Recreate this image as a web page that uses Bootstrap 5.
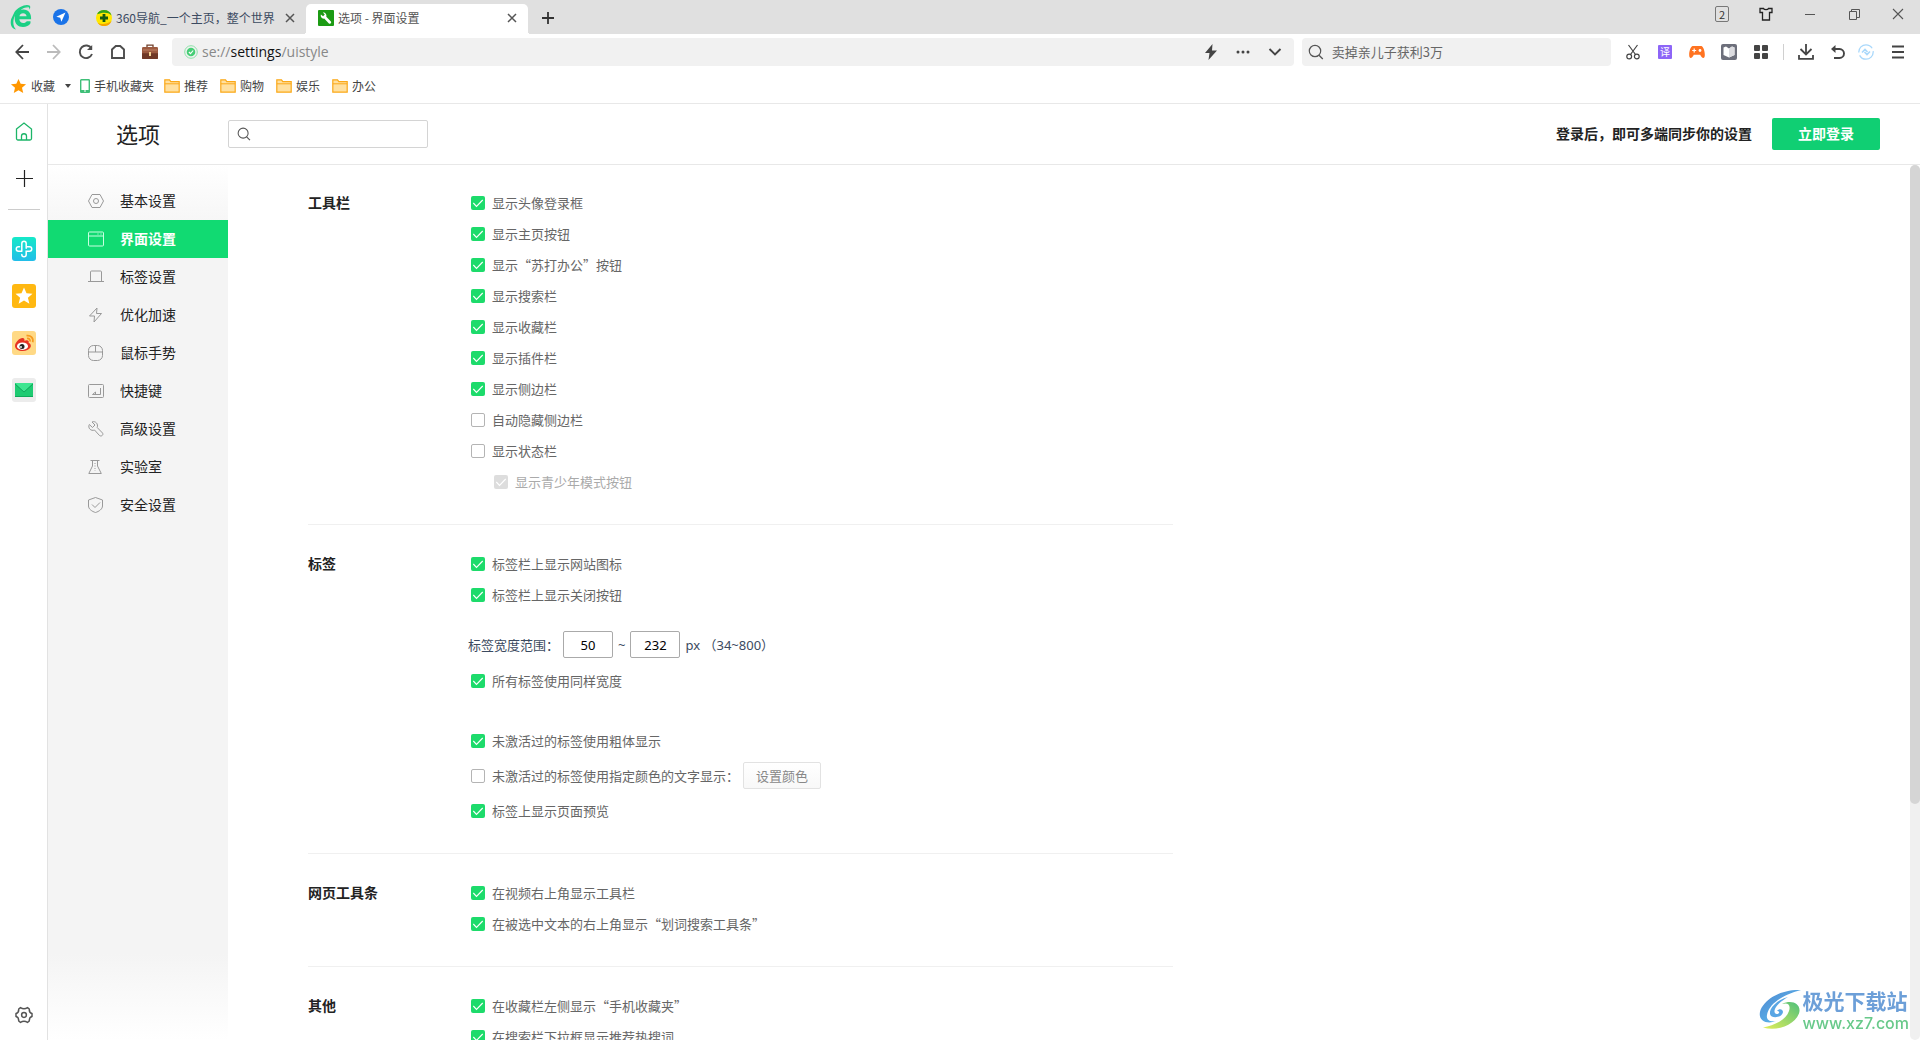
<!DOCTYPE html>
<html lang="zh-CN">
<head>
<meta charset="utf-8">
<meta name="viewport" content="width=device-width, initial-scale=1">
<title>选项 - 界面设置</title>
<link href="https://cdn.jsdelivr.net/npm/bootstrap@5.3.0/dist/css/bootstrap.min.css" rel="stylesheet">
<style>
body{font-family:"Noto Sans CJK SC",sans-serif;font-size:12px;line-height:20px;color:#444;background:#fff}
svg{display:block;flex:none}
button{font-family:inherit}
.plain-btn{border:0;background:none;padding:0;display:flex;align-items:center;justify-content:center;color:#4d4d4d;flex:none}
.fill-y{min-height:0;min-width:0}
/* tab strip */
.tab-strip{height:34px;background:#e0e0e0}
.strip-logo{width:41px}
.strip-pin{width:39px}
.page-tab{width:222px;height:28px;padding:0 8px 0 12px;color:#3b4a60;gap:4px}
.page-tab.current{height:32px;background:#fff;border-radius:5px 5px 0 0;color:#555;position:relative;padding-bottom:4px}
.page-tab.current::before,.page-tab.current::after{content:"";position:absolute;bottom:0;width:5px;height:5px}
.page-tab.current::before{left:-5px;background:radial-gradient(circle at 0 0,transparent 5px,#fff 5px)}
.page-tab.current::after{right:-5px;background:radial-gradient(circle at 100% 0,transparent 5px,#fff 5px)}
.page-tab a,.fav-bar a{color:inherit;text-decoration:none;white-space:nowrap}
.tab-close{width:16px;height:16px}
.strip-btn{width:40px;height:28px}
.win-btn{width:44px;height:28px}
.win-count{border:1px solid #777;border-radius:2px;width:14px;height:16px;line-height:14px;font-size:11px;color:#333}
/* address row */
.nav-row{height:36px;padding:0 2px 0 6px}
.tool-btn{width:32px;height:28px}
.sync-btn{width:24px}
.menu-btn{width:40px}
.omni{height:28px;background:#f1f1f1;border-radius:4px}
.omni-url{flex:1124 1 0;margin-left:6px;padding:0 3px 0 12px}
.omni-url .url{font:14px/20px "Open Sans","Noto Sans",sans-serif;color:#888}
.omni-url .url b{font-weight:400;color:#111}
.omni-find{flex:308 1 0;margin-left:8px;padding-left:6px}
.omni-find input{font-size:13px;color:#555}
.omni-find input::placeholder{color:#666;opacity:1}
.ext-tools{margin-left:6px}
.bare-input{border:0;background:none;outline:0;padding:0;min-width:0;flex:1}
.tool-sep{width:13px;display:flex;justify-content:center}
.tool-sep i{width:1px;height:16px;background:#d0d0d0}
/* favourites */
.fav-bar{height:34px;border-bottom:1px solid #e8e8e8;padding:0 0 2px 10px}
.fav-bar a{display:flex;align-items:center;gap:4px}
.fav-more{padding:0 9px 0 10px}
.fav-list{gap:12px;margin-left:10px}
/* rail */
.rail{width:48px;border-right:1px solid #e2e2e2}
.rail .plain-btn{width:100%}
.rail .rail-add{margin-top:25px}
.rail hr{width:32px;margin:22px 0 0;border-color:#ccc;opacity:1}
.rail-apps{margin-top:27px;gap:23px}
/* page header */
.page-head{height:61px;border-bottom:1px solid #e8e8e8;padding-right:40px}
.page-head h1{font-size:22px;line-height:32px;font-weight:400;color:#222;margin:0;width:180px;padding:0 0 2px 68px}
.head-find{width:200px;height:28px;border:1px solid #d4d4d4;border-radius:2px;padding-left:8px}
.login-tip{font-size:14px;font-weight:700;color:#222;padding-bottom:2px}
.login-btn{width:108px;height:32px;border:0;border-radius:2px;background:#10cf73;color:#fff;font-size:14px;font-weight:700;margin-left:20px;padding:0 0 2px}
/* side menu */
.side-menu{width:180px;padding-top:17px;background:linear-gradient(#fff 0,#f4f4f4 70px,#f4f4f4 calc(100% - 86px),#fff 100%)}
.side-menu a{display:flex;align-items:center;height:38px;padding:0 0 2px 40px;gap:16px;font-size:14px;color:#222;text-decoration:none}
.side-menu svg{width:16px;height:16px;margin-top:2px;fill:none;stroke:#999;stroke-width:1}
.side-menu a.active{background:#11da72;color:#fff;font-weight:700}
.side-menu a.active svg{stroke:#c8ffe0}
/* options */
.options{padding-left:80px;overflow:hidden}
.opt-group{max-width:865px;padding:23px 0 27px;border-bottom:1px solid #f0f0f0}
.opt-group:first-child{padding-top:22px}
.opt-group h2{width:160px;margin:0;font-size:14px;line-height:30px;font-weight:700;color:#222;flex:none}
.opt-row{display:flex;align-items:center;height:31px;padding-left:3px;font-size:13px;color:#666;white-space:nowrap}
.opt-row .form-check-input{width:14px;height:14px;margin:0 7px 0 0;border:1px solid #b4b4b4;border-radius:2px;background-size:14px 14px;flex:none}
.opt-row .form-check-input:checked{background-color:#1ddb6b;border:0;background-image:url("data:image/svg+xml,%3csvg xmlns='http://www.w3.org/2000/svg' viewBox='0 0 14 14'%3e%3cpath fill='none' stroke='%23fff' stroke-width='1.1' d='M2.3 7l3.2 3.4L11.7 4'/%3e%3c/svg%3e")}
.opt-row.off{padding-left:26px;color:#aaa}
.opt-row.off .form-check-input{background-color:#ddd;opacity:1}
.opt-row.off label{opacity:1}
.opt-row.range{height:41px;margin-top:14px;padding-left:0;color:#3b4a60;font-family:"Noto Sans","Noto Sans CJK SC",sans-serif}
.range-dash{padding:0 5px}
.range-unit{margin-left:5px}
.opt-row.spaced{margin-top:29px}
.opt-row.tall{height:39px}
.num-box{width:50px;height:27px;border:1px solid #aaa;border-radius:2px;text-align:center;font-size:13px;color:#000;padding:0}
.color-btn{width:78px;height:27px;border:1px solid #e2e2e2;border-radius:2px;background:linear-gradient(#fff,#f8f8f8);color:#888;font-size:13px;padding:0;margin-left:4px}
.scroll-track{width:10px;background:#f0f0f0;border-radius:5px}
.scroll-track div{height:73%;background:#d5d5d5;border-radius:5px}
/* corner stamp */
.site-stamp{position:fixed;right:11px;bottom:7px;gap:1px}
.site-stamp .zh{font-size:21px;line-height:26px;font-weight:700;color:#6c9fd8}
.site-stamp .en{font:500 16px/20px Inter,sans-serif;color:#68c98a}
</style>
<script src="https://cdn.jsdelivr.net/npm/bootstrap@5.3.0/dist/js/bootstrap.bundle.min.js"></script>
</head>
<body class="vh-100 d-flex flex-column overflow-hidden">

<svg width="0" height="0" class="position-absolute">
  <symbol id="folder" viewBox="0 0 16 14"><path d="M.8 13.200V.8h4.700l1.300 1.900h8.400v10.500z" fill="#ffe0a0" stroke="#fba919" stroke-width="1.200"/><path d="M.8 4.800h14.400" stroke="#fba919"/></symbol>
  <symbol id="cross" viewBox="0 0 10 10"><path d="M1 1l8 8M9 1L1 9" stroke="#555" stroke-width="1.500"/></symbol>
  <symbol id="lens" viewBox="0 0 16 16"><circle cx="7" cy="7" r="5.700" fill="none" stroke="#555" stroke-width="1.200"/><path d="M11 11.200l3.800 3.800" stroke="#555" stroke-width="1.300"/></symbol>
</svg>

<header>
  <div class="tab-strip d-flex">
    <div class="strip-logo d-flex align-items-center justify-content-end">
      <svg width="32" height="28" viewBox="0 0 32 28"><path d="M25.500 20.200C23.900 22.700 21.200 24 18 24c-5 0-8.300-3.500-8.300-8.500 0-5.200 3.600-8.900 8.500-8.900 5.300 0 8.300 4 7.900 9.700H14.300c.3 2.400 1.700 3.700 4 3.700 1.500 0 2.700-.7 3.400-1.800h3.800zM14.400 13.200h7.200c-.3-1.900-1.600-3-3.500-3s-3.300 1.100-3.700 3z" fill="#1bd084" transform="translate(-4)"/><path d="M9 12c2-4.700 6.500-8.200 12-7.800-1-1-4-.9-6-.1C10.500 6 7.500 9.500 6.500 14" fill="#1bd084" transform="translate(-1)"/><path d="M5.500 9C9 4 17 .7 20.500 2.600c1.200.8.900 2.600-.1 4.100.1-1.700-.3-2.700-1.800-2.900C14 3.200 9 7 6 12.500 3.800 16.700 3.500 23 7 26.500 2.600 26 .8 21 2.200 16" fill="#1bd084"/></svg>
    </div>
    <div class="strip-pin d-flex align-items-center justify-content-center">
      <svg width="16" height="34" viewBox="0 0 16 34"><circle cx="8" cy="17" r="8" fill="#1a73e8"/><path d="M12.500 12.500L3.300 16.800l3.900 1 1.200 4z" fill="#fff"/></svg>
    </div>
    <div class="d-flex pt-1 mt-auto align-items-end">
      <div class="page-tab d-flex align-items-center align-self-start ms-1">
        <svg width="16" height="16" viewBox="0 0 16 16"><circle cx="8" cy="8" r="8" fill="#ffe800"/><path d="M8 0a8 8 0 0 1 7.600 5.500C12 1.500 6 2.500 1 4.200A8 8 0 0 1 8 0z" fill="#2fa21f"/><path d="M15.500 11A8 8 0 0 1 1.500 12.700C6 15 11 14 15.500 11z" fill="#f5a400"/><path d="M8 4v8M4 8h8" stroke="#155a12" stroke-width="2.800"/></svg>
        <a href="#" class="flex-grow-1">360导航_一个主页，整个世界</a>
        <button class="plain-btn tab-close" aria-label="关闭标签"><svg width="10" height="10"><use href="#cross"/></svg></button>
      </div>
      <div class="page-tab current d-flex align-items-center">
        <svg width="16" height="16" viewBox="0 0 16 16"><rect width="16" height="16" rx="1" fill="#1c9b14"/><path d="M4.800 2.600l2 2-1.700 1.700-2.200-1.800c-.7 2.200 1 4.500 3.300 4.100l4.700 4.800c1.300 1 3-.6 2-1.900L8.300 6.800c.7-2.500-1.300-4.600-3.500-4.200z" fill="#fff"/></svg>
        <a href="#" class="flex-grow-1">选项 - 界面设置</a>
        <button class="plain-btn tab-close" aria-label="关闭标签"><svg width="10" height="10"><use href="#cross"/></svg></button>
      </div>
      <button class="plain-btn strip-btn align-self-start" aria-label="新标签"><svg width="12" height="12" viewBox="0 0 12 12"><path d="M6 0v12M0 6h12" stroke="#333" stroke-width="1.800"/></svg></button>
    </div>
    <div class="ms-auto d-flex">
      <button class="plain-btn win-btn"><span class="win-count">2</span></button>
      <button class="plain-btn win-btn" aria-label="皮肤"><svg width="14" height="14" viewBox="0 0 14 14"><path d="M1 1.500h3.500c.6 1.500 4.400 1.500 5 0H13v4h-2.500v7.500h-7V5.500H1z" fill="none" stroke="#222" stroke-width="1.300"/></svg></button>
      <button class="plain-btn win-btn" aria-label="最小化"><svg width="10" height="10"><path d="M0 5.500h10" stroke="#555"/></svg></button>
      <button class="plain-btn win-btn" aria-label="还原"><svg width="11" height="11"><path d="M.5 2.500h7v8h-7zM2.500 2.500v-2h8v8h-3" fill="none" stroke="#555"/></svg></button>
      <button class="plain-btn win-btn" aria-label="关闭"><svg width="12" height="12"><path d="M1 1l10 10M11 1L1 11" stroke="#555" stroke-width="1.100"/></svg></button>
    </div>
  </div>

  <div class="nav-row d-flex align-items-center">
    <button class="plain-btn tool-btn" aria-label="后退"><svg width="14" height="16" viewBox="0 0 14 16" fill="none" stroke="#444" stroke-width="1.800"><path d="M14 8H1.500M8 1L1.300 8 8 15"/></svg></button>
    <button class="plain-btn tool-btn" aria-label="前进"><svg width="14" height="16" viewBox="0 0 14 16" fill="none" stroke="#bbb" stroke-width="1.800"><path d="M0 8h12.500M6 1l6.700 7L6 15"/></svg></button>
    <button class="plain-btn tool-btn" aria-label="刷新"><svg width="16" height="16" viewBox="0 0 16 16" fill="none" stroke="#4d4d4d" stroke-width="1.900"><path d="M13.500 4.500A6.300 6.300 0 1 0 14 10"/><path d="M14.200 1v5H9z" fill="#4d4d4d" stroke="none"/></svg></button>
    <button class="plain-btn tool-btn" aria-label="主页"><svg width="16" height="16" viewBox="0 0 16 16" fill="none" stroke="#4d4d4d" stroke-width="1.900"><path d="M2 14V5.500L5.800 2h4.400L14 5.500V14z"/></svg></button>
    <button class="plain-btn tool-btn" aria-label="办公"><svg width="16" height="16" viewBox="0 0 16 16"><path d="M5 3V1.200h6V3" fill="none" stroke="#70402c" stroke-width="1.300"/><rect y="3" width="16" height="12" rx="1.300" fill="#9c5a40"/><path d="M0 9.200h16V14c0 .6-.5 1-1 1H1c-.6 0-1-.4-1-1z" fill="#6f3827"/><path d="M1 6h14" stroke="#be8266"/><rect x="7" y="8" width="2" height="4" fill="#f3d393"/></svg></button>
    <div class="omni omni-url d-flex align-items-center">
      <svg width="14" height="14" viewBox="0 0 14 14" class="me-1"><circle cx="7" cy="7" r="6.300" fill="none" stroke="#8ce2a8"/><circle cx="7" cy="7" r="4.300" fill="#45ce75"/><path d="M4.900 7l1.600 1.700L9.200 5.500" fill="none" stroke="#fff" stroke-width="1.100"/></svg>
      <span class="url flex-grow-1">se://<b>settings</b>/uistyle</span>
      <button class="plain-btn tool-btn" aria-label="极速模式"><svg width="14" height="16" viewBox="0 0 14 16"><path d="M8.500 0L1 9h4.500L4.500 16 13 6.500H8z" fill="#444"/></svg></button>
      <button class="plain-btn tool-btn" aria-label="更多"><svg width="14" height="4"><circle cx="2" cy="2" r="1.500" fill="#444"/><circle cx="7" cy="2" r="1.500" fill="#444"/><circle cx="12" cy="2" r="1.500" fill="#444"/></svg></button>
      <button class="plain-btn tool-btn" aria-label="展开"><svg width="14" height="8"><path d="M1.500 1L7 6.500 12.500 1" fill="none" stroke="#444" stroke-width="1.900"/></svg></button>
    </div>
    <div class="omni omni-find d-flex align-items-center">
      <svg width="16" height="16" class="me-2"><use href="#lens"/></svg>
      <input class="bare-input" type="text" placeholder="卖掉亲儿子获利3万" aria-label="搜索">
    </div>
    <div class="ext-tools d-flex align-items-center">
      <button class="plain-btn tool-btn" aria-label="截图"><svg width="14" height="16" viewBox="0 0 14 16" fill="none" stroke="#444" stroke-width="1.200"><circle cx="3.200" cy="12.500" r="2.400"/><circle cx="10.800" cy="12.500" r="2.400"/><path d="M2.500 1l7 9.500M11.500 1l-7 9.500"/></svg></button>
      <button class="plain-btn tool-btn" aria-label="翻译"><svg width="14" height="14" viewBox="0 0 14 14"><rect width="14" height="14" rx="1" fill="#8d65f7"/><text x="7" y="11" font-size="10" fill="#fff" text-anchor="middle">译</text></svg></button>
      <button class="plain-btn tool-btn" aria-label="游戏"><svg width="16" height="14" viewBox="0 0 16 14"><path d="M3.500 1h9C15 2 16.500 9 15.500 12c-1 2-3.200.3-4.300-2.300H4.800C3.700 12.300 1.500 14 .5 12-.5 9 1 2 3.500 1z" fill="#ff7321"/><path d="M5.200 3.500v4M3.200 5.500h4" stroke="#fff" stroke-width="1.200"/><circle cx="11" cy="5.500" r="1.400" fill="#fff"/></svg></button>
      <button class="plain-btn tool-btn" aria-label="阅读"><svg width="16" height="16" viewBox="0 0 16 16"><rect width="16" height="16" rx="2" fill="#6d6f7b"/><path d="M2.500 3.500L5 2.500l3 2 3-2 2.500 1V11L8 13.500 2.500 11z" fill="#fff"/><path d="M8 4.500l3-2 2.500 1V11L8 13.500z" fill="#dcdce0"/></svg></button>
      <button class="plain-btn tool-btn" aria-label="应用"><svg width="14" height="14" fill="#444"><rect width="6" height="6" rx="1"/><rect x="8" width="6" height="6" rx="1"/><rect y="8" width="6" height="6" rx="1"/><rect x="8" y="8" width="6" height="6" rx="1"/></svg></button>
      <span class="tool-sep"><i></i></span>
      <button class="plain-btn tool-btn" aria-label="下载"><svg width="16" height="16" viewBox="0 0 16 16" fill="none" stroke="#444" stroke-width="1.800"><path d="M8 0v10M2.500 5L8 10.500 13.500 5M1 11v3.800h14V11"/></svg></button>
      <button class="plain-btn tool-btn" aria-label="恢复"><svg width="14" height="14" viewBox="0 0 14 14" fill="none" stroke="#444" stroke-width="1.900"><path d="M2 4h6.500a4.500 4.500 0 0 1 0 9H3"/><path d="M4.500 0v8L0 4z" fill="#444" stroke="none"/></svg></button>
      <button class="plain-btn sync-btn" aria-label="同步"><svg width="16" height="16" viewBox="0 0 16 16" fill="none" stroke="#a9d8fb" stroke-width="1.300"><circle cx="8" cy="8" r="7.200" stroke-dasharray="19 3"/><path d="M4 8.500L7 5.500 9.500 8M12 7.500L9 10.500 6.500 8" stroke-width="1.600"/></svg></button>
      <button class="plain-btn menu-btn" aria-label="菜单"><svg width="12" height="14"><path d="M0 1.500h12M0 7h12M0 12.500h12" stroke="#444" stroke-width="1.900"/></svg></button>
    </div>
  </div>

  <nav class="fav-bar d-flex align-items-center">
    <a href="#"><svg width="17" height="16" viewBox="0 0 18 16"><path d="M9 .5l2.300 5.200 5.700.5-4.300 3.700 1.300 5.600L9 12.500l-5 3 1.300-5.600L1 6.200l5.700-.5z" fill="#ff9700"/></svg>收藏</a>
    <button class="plain-btn fav-more" aria-label="展开收藏"><svg width="6" height="4"><path d="M0 0h6L3 4z" fill="#444"/></svg></button>
    <a href="#"><svg width="10" height="14" viewBox="0 0 10 14"><rect x=".7" y=".7" width="8.600" height="12.600" rx=".6" fill="#fff" stroke="#3fbf78" stroke-width="1.400"/><path d="M0 11h10v2.300H0z" fill="#3fbf78"/><path d="M4 12h2" stroke="#fff"/></svg>手机收藏夹</a>
    <div class="fav-list d-flex">
      <a href="#"><svg width="16" height="14"><use href="#folder"/></svg>推荐</a>
      <a href="#"><svg width="16" height="14"><use href="#folder"/></svg>购物</a>
      <a href="#"><svg width="16" height="14"><use href="#folder"/></svg>娱乐</a>
      <a href="#"><svg width="16" height="14"><use href="#folder"/></svg>办公</a>
    </div>
  </nav>
</header>

<div class="d-flex flex-grow-1 fill-y">
  <aside class="rail d-flex flex-column align-items-center flex-shrink-0 pt-3 pb-3">
    <button class="plain-btn" aria-label="首页"><svg width="18" height="24" viewBox="0 0 18 24" fill="none" stroke="#1cb568" stroke-width="1.300"><path d="M1.500 9L9 3l7.500 6v9.500a1.500 1.500 0 0 1-1.500 1.500H3a1.500 1.500 0 0 1-1.500-1.500zM6.500 20v-4c0-3 5-3 5 0v4"/></svg></button>
    <button class="plain-btn rail-add" aria-label="添加"><svg width="18" height="18"><path d="M9.500 1v17M1 9.500h17" stroke="#222" stroke-width="1.200"/></svg></button>
    <hr>
    <div class="rail-apps d-flex flex-column w-100">
      <button class="plain-btn" aria-label="健康"><svg width="24" height="24" viewBox="0 0 24 24"><linearGradient id="g1" x2="0" y2="1"><stop stop-color="#15e9c8"/><stop offset="1" stop-color="#22bde9"/></linearGradient><rect width="24" height="24" rx="3" fill="url(#g1)"/><path d="M9.800 14.200V6.500c0-3 4.400-3 4.400 0v3.300h3.300c3 0 3 4.400 0 4.400h-3.300v3.300c0 3-4.400 3-4.400 0M9.800 14.200H6.500c-3 0-3-4.400 0-4.400h1M14.200 9.800v1.500" fill="none" stroke="#fff" stroke-width="1.500" stroke-linecap="round"/></svg></button>
      <button class="plain-btn" aria-label="收藏夹"><svg width="24" height="24" viewBox="0 0 24 24"><rect width="24" height="24" rx="3" fill="#ffb811"/><path d="M12 3.500l2.500 5.800 6 .5-4.600 4 1.500 6L12 16.500l-5.400 3.300 1.500-6-4.600-4 6-.5z" fill="#fff"/></svg></button>
      <button class="plain-btn" aria-label="微博"><svg width="24" height="24" viewBox="0 0 24 24"><rect width="24" height="24" rx="3" fill="#ffd985"/><path d="M3 15c0-4 5.500-9 8.500-7.800 1.300.5 1 1.800.8 2.500 3-1.200 5.200-.4 4.300 2 5 2.300 1.400 8.300-6 8.300C6.500 20 3 18 3 15z" fill="#e63223"/><ellipse cx="10.500" cy="15.200" rx="5.500" ry="3.700" fill="#fff"/><circle cx="10" cy="15.400" r="2.500" fill="#222"/><circle cx="9" cy="16" r=".9" fill="#fff"/><path d="M14.500 4.700c4.200-.7 7.300 2.300 6.200 6.600M15 7.500c2-.3 3.500 1 3 3" fill="none" stroke="#f79a1e" stroke-width="1.700"/></svg></button>
      <button class="plain-btn" aria-label="邮箱"><svg width="24" height="24" viewBox="0 0 24 24"><rect width="24" height="24" rx="3" fill="#ececec"/><rect x="3" y="5" width="18" height="14" fill="#1ecb72"/><path d="M3 5h18l-9 9z" fill="#3ee691"/><path d="M3 6l9 8 9-8" fill="none" stroke="#0e9a55" stroke-width=".8"/><path d="M3 18.500h18" stroke="#0faa5b"/></svg></button>
    </div>
    <button class="plain-btn mt-auto" aria-label="设置"><svg width="18" height="18" viewBox="0 0 18 18" fill="none" stroke="#555" stroke-width="1.500" stroke-linejoin="round"><path d="M5.500 1.600Q9 3.800 12.500 1.600L14.300 3q-.3 3.700 2.700 4.500v3q-3 .8-2.700 4.500l-1.800 1.400Q9 14.200 5.500 16.400L3.700 15Q4 11.300 1 10.500v-3Q4 6.700 3.700 3z"/><circle cx="9" cy="9" r="2.400"/></svg></button>
  </aside>

  <div class="d-flex flex-column flex-grow-1 fill-y">
    <div class="page-head d-flex align-items-center flex-shrink-0">
      <h1>选项</h1>
      <div class="head-find d-flex align-items-center">
        <svg width="14" height="14" class="me-2"><use href="#lens"/></svg>
        <input class="bare-input" type="text" aria-label="搜索设置">
      </div>
      <span class="login-tip ms-auto">登录后，即可多端同步你的设置</span>
      <button class="login-btn">立即登录</button>
    </div>

    <div class="d-flex flex-grow-1 fill-y">
      <nav class="side-menu flex-shrink-0">
        <a href="#"><svg viewBox="0 0 16 16"><path d="M4 1.500h8L15.500 8 12 14.500H4L.5 8z"/><circle cx="8" cy="8" r="2.500"/></svg>基本设置</a>
        <a href="#" class="active"><svg viewBox="0 0 16 16"><rect x=".5" y="1" width="15" height="14" rx="1"/><path d="M.5 5h15M9.500 3h1M12.500 3h1"/></svg>界面设置</a>
        <a href="#"><svg viewBox="0 0 16 16"><path d="M0 12.500h16M2.500 12.500V3a1 1 0 0 1 1-1h9a1 1 0 0 1 1 1v9.500"/></svg>标签设置</a>
        <a href="#"><svg viewBox="0 0 16 16"><path d="M9 1L1.500 9h5L6 15l7.500-8.500h-5z"/></svg>优化加速</a>
        <a href="#"><svg viewBox="0 0 16 16"><rect x=".5" y=".5" width="14" height="15" rx="5"/><path d="M.5 7h14M7.500.5V7"/></svg>鼠标手势</a>
        <a href="#"><svg viewBox="0 0 16 16"><rect x=".5" y="1.500" width="15" height="13" rx="1"/><path d="M12.500 5v6.500h-8L7.500 9v2.500"/></svg>快捷键</a>
        <a href="#"><svg viewBox="0 0 16 16"><path d="M4 1l3 3-2.500 2.500L1.300 3.500C-.5 7 3 10.500 6.500 9l5 5.500c2 1.500 4.300-.8 3-2.500L9.200 6.500C10.500 3 7.500-.5 4 1z"/></svg>高级设置</a>
        <a href="#"><svg viewBox="0 0 16 16"><path d="M2.500 1.500h9M4.500 1.500V7L.8 14.500h12.500L9.500 7V1.500"/><path d="M7 4v8" stroke-dasharray="1 1.500"/></svg>实验室</a>
        <a href="#"><svg viewBox="0 0 16 16"><path d="M7.500.5l7 2.500v6c0 3-3.500 5.500-7 6.500C4 14.500.5 12 .5 9V3z"/><path d="M4 7.500l3 3 5-5"/></svg>安全设置</a>
      </nav>

      <main class="options flex-grow-1">
        <section class="opt-group d-flex">
          <h2>工具栏</h2>
          <div>
            <div class="opt-row"><input class="form-check-input" type="checkbox" id="o1" checked><label for="o1">显示头像登录框</label></div>
            <div class="opt-row"><input class="form-check-input" type="checkbox" id="o2" checked><label for="o2">显示主页按钮</label></div>
            <div class="opt-row"><input class="form-check-input" type="checkbox" id="o3" checked><label for="o3">显示“苏打办公”按钮</label></div>
            <div class="opt-row"><input class="form-check-input" type="checkbox" id="o4" checked><label for="o4">显示搜索栏</label></div>
            <div class="opt-row"><input class="form-check-input" type="checkbox" id="o5" checked><label for="o5">显示收藏栏</label></div>
            <div class="opt-row"><input class="form-check-input" type="checkbox" id="o6" checked><label for="o6">显示插件栏</label></div>
            <div class="opt-row"><input class="form-check-input" type="checkbox" id="o7" checked><label for="o7">显示侧边栏</label></div>
            <div class="opt-row"><input class="form-check-input" type="checkbox" id="o8"><label for="o8">自动隐藏侧边栏</label></div>
            <div class="opt-row"><input class="form-check-input" type="checkbox" id="o9"><label for="o9">显示状态栏</label></div>
            <div class="opt-row off"><input class="form-check-input" type="checkbox" id="o10" checked disabled><label for="o10">显示青少年模式按钮</label></div>
          </div>
        </section>
        <section class="opt-group d-flex">
          <h2>标签</h2>
          <div>
            <div class="opt-row"><input class="form-check-input" type="checkbox" id="t1" checked><label for="t1">标签栏上显示网站图标</label></div>
            <div class="opt-row"><input class="form-check-input" type="checkbox" id="t2" checked><label for="t2">标签栏上显示关闭按钮</label></div>
            <div class="opt-row range"><label for="wmin">标签宽度范围：</label><input class="num-box ms-1" type="text" id="wmin" value="50"><label class="range-dash" for="wmax">~</label><input class="num-box" type="text" id="wmax" value="232"><span class="range-unit">px （34~800）</span></div>
            <div class="opt-row"><input class="form-check-input" type="checkbox" id="t3" checked><label for="t3">所有标签使用同样宽度</label></div>
            <div class="opt-row spaced"><input class="form-check-input" type="checkbox" id="t4" checked><label for="t4">未激活过的标签使用粗体显示</label></div>
            <div class="opt-row tall"><input class="form-check-input" type="checkbox" id="t5"><label for="t5">未激活过的标签使用指定颜色的文字显示：</label><button class="color-btn">设置颜色</button></div>
            <div class="opt-row"><input class="form-check-input" type="checkbox" id="t6" checked><label for="t6">标签上显示页面预览</label></div>
          </div>
        </section>
        <section class="opt-group d-flex">
          <h2>网页工具条</h2>
          <div>
            <div class="opt-row"><input class="form-check-input" type="checkbox" id="w1" checked><label for="w1">在视频右上角显示工具栏</label></div>
            <div class="opt-row"><input class="form-check-input" type="checkbox" id="w2" checked><label for="w2">在被选中文本的右上角显示“划词搜索工具条”</label></div>
          </div>
        </section>
        <section class="opt-group d-flex">
          <h2>其他</h2>
          <div>
            <div class="opt-row"><input class="form-check-input" type="checkbox" id="q1" checked><label for="q1">在收藏栏左侧显示“手机收藏夹”</label></div>
            <div class="opt-row"><input class="form-check-input" type="checkbox" id="q2" checked><label for="q2">在搜索栏下拉框显示推荐热搜词</label></div>
          </div>
        </section>
      </main>
      <div class="scroll-track flex-shrink-0"><div></div></div>
    </div>
  </div>
</div>

<div class="site-stamp d-flex align-items-center">
  <svg width="44" height="42" viewBox="0 0 44 42"><linearGradient id="g2" x2="1" y2="1"><stop stop-color="#4f86cf"/><stop offset="1" stop-color="#5fc6f5"/></linearGradient><linearGradient id="g3" x1="1" x2="0" y2="1"><stop stop-color="#4fc07a"/><stop offset="1" stop-color="#e3ee5a"/></linearGradient><path d="M43 1C26 0 8 8 2.500 21-1 31 8 36 18 32c-6 1-10-1-9-6C11 15 24 6 43 1z" fill="url(#g2)"/><path d="M30 8C19 11 11 19 12 25c1 5 12 4 13-2 0-3-4-4-6-1 2 0 3 1 1.500 2.500-2 1.500-4.500 0-4-3C17.500 17 23 12 30 8z" fill="#5aa6e4"/><path d="M24 15c6-2 9 1 7 7C28 31 17 36 5 38.500c14 4 31-2 36-14C44 15 34 10 24 15z" fill="url(#g3)"/></svg>
  <div class="d-flex flex-column"><span class="zh">极光下载站</span><span class="en">www.xz7.com</span></div>
</div>
</body>
</html>
